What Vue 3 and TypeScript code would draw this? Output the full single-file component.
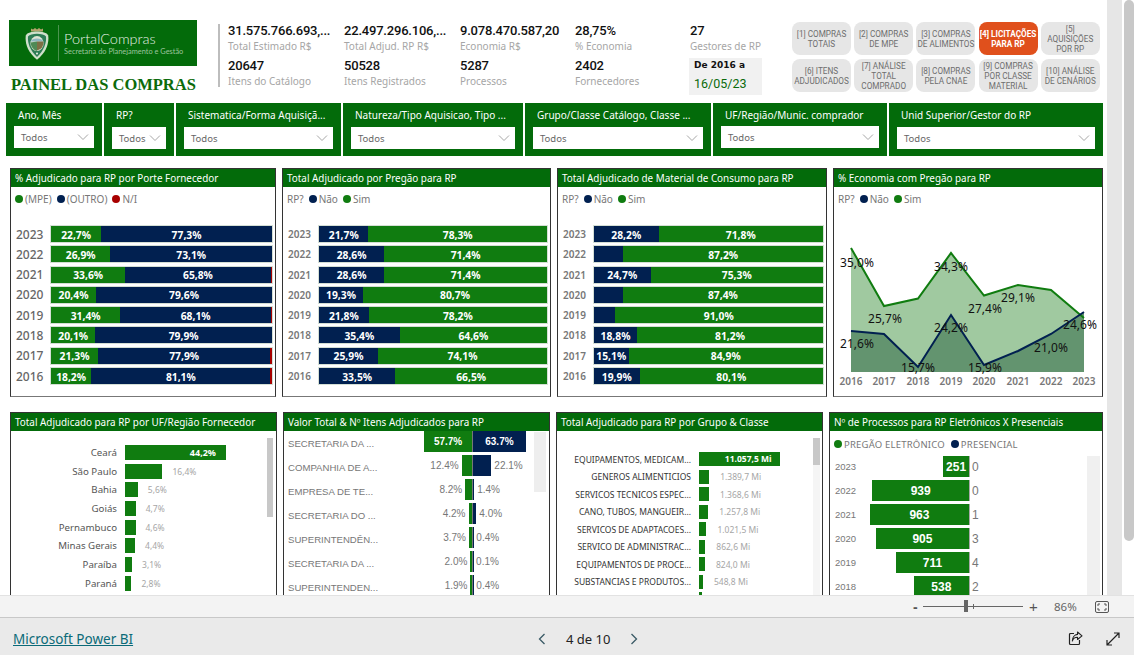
<script setup lang="ts">
interface Seg { v: number; c: string; label?: boolean }

const kpis = [
  { value: "31.575.766.693,...", label: "Total Estimado R$" },
  { value: "22.497.296.106,...", label: "Total Adjud. RP R$" },
  { value: "9.078.470.587,20", label: "Economia R$" },
  { value: "28,75%", label: "% Economia" },
  { value: "27", label: "Gestores de RP" },
  { value: "20647", label: "Itens do Catálogo" },
  { value: "50528", label: "Itens Registrados" },
  { value: "5287", label: "Processos" },
  { value: "2402", label: "Fornecedores" },
];

const navButtons = [
  "[1] COMPRAS\nTOTAIS",
  "[2] COMPRAS\nDE MPE",
  "[3] COMPRAS\nDE ALIMENTOS",
  "[4] LICITAÇÕES\nPARA RP",
  "[5]\nAQUISIÇÕES\nPOR RP",
  "[6] ITENS\nADJUDICADOS",
  "[7] ANÁLISE\nTOTAL\nCOMPRADO",
  "[8] COMPRAS\nPELA CNAE",
  "[9] COMPRAS\nPOR CLASSE\nMATERIAL",
  "[10] ANÁLISE\nDE CENÁRIOS",
];

const filters = [
  "Ano, Mês",
  "RP?",
  "Sistematica/Forma Aquisiçã...",
  "Natureza/Tipo Aquisicao, Tipo ...",
  "Grupo/Classe Catálogo, Classe ...",
  "UF/Região/Munic. comprador",
  "Unid Superior/Gestor do RP",
];

const years = [2023, 2022, 2021, 2020, 2019, 2018, 2017, 2016];
const GREEN = "#107c10";
const NAVY = "#012050";
const RED = "#a80000";

const porte = [
  [22.7, 77.3, 0],
  [26.9, 73.1, 0],
  [33.6, 65.8, 0.6],
  [20.4, 79.6, 0],
  [31.4, 68.1, 0.5],
  [20.1, 79.9, 0],
  [21.3, 77.9, 0.8],
  [18.2, 81.1, 0.7],
];
const pregao = [21.7, 28.6, 28.6, 19.3, 21.8, 35.4, 25.9, 33.5];
const material = [28.2, 12.8, 24.7, 12.6, 9, 18.8, 15.1, 19.9];

function fmt(v: number) {
  return v.toFixed(1).replace(".", ",") + "%";
}

const stackCards: {
  title: string;
  legend: { t: string; c: string }[];
  prefix: string;
  big: boolean;
  rows: Seg[][];
}[] = [
  {
    title: "% Adjudicado para RP por Porte Fornecedor",
    prefix: "",
    big: true,
    legend: [
      { t: "(MPE)", c: GREEN },
      { t: "(OUTRO)", c: NAVY },
      { t: "N/I", c: RED },
    ],
    rows: porte.map((r) => [
      { v: r[0], c: GREEN, label: true },
      { v: r[1], c: NAVY, label: true },
      { v: r[2], c: RED },
    ]),
  },
  {
    title: "Total Adjudicado por Pregão para RP",
    prefix: "RP?",
    big: false,
    legend: [
      { t: "Não", c: NAVY },
      { t: "Sim", c: GREEN },
    ],
    rows: pregao.map((n) => [
      { v: n, c: NAVY, label: true },
      { v: +(100 - n).toFixed(1), c: GREEN, label: true },
    ]),
  },
  {
    title: "Total Adjudicado de Material de Consumo para RP",
    prefix: "RP?",
    big: false,
    legend: [
      { t: "Não", c: NAVY },
      { t: "Sim", c: GREEN },
    ],
    rows: material.map((n) => [
      { v: n, c: NAVY, label: n > 14 },
      { v: +(100 - n).toFixed(1), c: GREEN, label: true },
    ]),
  },
];

// pontos do gráfico de área, em px do próprio visual
const areaX = [851, 884, 918, 951, 984, 1018, 1051, 1084];
const simY = [248, 306, 298.5, 253, 295.5, 285, 290, 318];
const naoY = [331, 334, 367, 315, 365, 351, 334, 312];
const line = (ys: number[]) => ys.map((y, i) => `${areaX[i]},${y}`).join(" ");
const area = (ys: number[]) => `851,372 ${line(ys)} 1084,372`;
const areaLabels = [
  { t: "35,0%", x: 857, y: 263 },
  { t: "25,7%", x: 885, y: 319 },
  { t: "15,7%", x: 918, y: 368 },
  { t: "34,3%", x: 951, y: 267 },
  { t: "27,4%", x: 985, y: 309 },
  { t: "29,1%", x: 1018, y: 298 },
  { t: "21,0%", x: 1051, y: 348 },
  { t: "24,6%", x: 1080, y: 325 },
  { t: "21,6%", x: 857, y: 344 },
  { t: "24,2%", x: 951, y: 328 },
  { t: "15,9%", x: 985, y: 368 },
];

const ufRows = [
  { n: "Ceará", v: 44.2 },
  { n: "São Paulo", v: 16.4 },
  { n: "Bahia", v: 5.6 },
  { n: "Goiás", v: 4.7 },
  { n: "Pernambuco", v: 4.6 },
  { n: "Minas Gerais", v: 4.4 },
  { n: "Paraíba", v: 3.1 },
  { n: "Paraná", v: 2.8 },
  { n: "", v: 2.8 },
];

const tornado = [
  { n: "SECRETARIA DA ...", l: 57.7, r: 63.7 },
  { n: "COMPANHIA DE A...", l: 12.4, r: 22.1 },
  { n: "EMPRESA DE TE...", l: 8.2, r: 1.4 },
  { n: "SECRETARIA DO ...", l: 4.2, r: 4.0 },
  { n: "SUPERINTENDÊN...", l: 3.7, r: 0.4 },
  { n: "SECRETARIA DA ...", l: 2.0, r: 0.1 },
  { n: "SUPERINTENDEN...", l: 1.9, r: 0.4 },
];

const grupos = [
  { n: "EQUIPAMENTOS, MEDICAM...", v: 11057.5, t: "11.057,5 Mi" },
  { n: "GENEROS ALIMENTICIOS", v: 1389.7, t: "1.389,7 Mi" },
  { n: "SERVICOS TECNICOS ESPEC...", v: 1368.6, t: "1.368,6 Mi" },
  { n: "CANO, TUBOS, MANGUEIR...", v: 1257.8, t: "1.257,8 Mi" },
  { n: "SERVICOS DE ADAPTACOES...", v: 1021.5, t: "1.021,5 Mi" },
  { n: "SERVICO DE ADMINISTRAC...", v: 862.6, t: "862,6 Mi" },
  { n: "EQUIPAMENTOS DE PROCE...", v: 824.0, t: "824,0 Mi" },
  { n: "SUBSTANCIAS E PRODUTOS...", v: 548.8, t: "548,8 Mi" },
  { n: "", v: 400, t: "" },
];

const processos = [
  { y: 2023, e: 251, p: 0 },
  { y: 2022, e: 939, p: 0 },
  { y: 2021, e: 963, p: 1 },
  { y: 2020, e: 905, p: 3 },
  { y: 2019, e: 711, p: 4 },
  { y: 2018, e: 538, p: 2 },
];
</script>

<template>
  <div class="app">
    <div class="main">
      <div class="canvas">
        <header class="top">
          <div class="brand">
            <div class="logo">
              <svg class="crest" viewBox="0 0 24 33" width="24" height="33">
                <path d="M6 4.500V1.500l2 1 2-1.500 2 1.500 2-1.500 2 1.500 2-1V4.500Z" fill="#b5a36e" />
                <path d="M12 4.500C17 4.500 22 5.500 23.200 8.500C24.200 16 21.500 25 12 32.800C2.500 25 -.2 16 .8 8.500C2 5.500 7 4.500 12 4.500Z" fill="#cfe0cb" />
                <path d="M12 6.800C16 6.800 19.600 7.800 21 9.600C21.600 16 19 23.600 12 30C5 23.600 2.400 16 3 9.600C4.400 7.800 8 6.800 12 6.800Z" fill="#2e7d56" />
                <ellipse cx="12" cy="16.500" rx="6.600" ry="7.600" fill="#dfe6d4" />
                <path d="M5.600 14.500C7 10.500 17 10.500 18.400 14.500Z" fill="#8fb6c0" />
                <path d="M12 14.500h6.400c.4 3-1 6-3 7.600l-3.400 1.500Z" fill="#7d6f45" />
                <path d="M5.600 15.500L12 14.500V24C8.500 23 5.800 20 5.600 15.500Z" fill="#4f8a55" />
                <circle cx="12" cy="26.500" r="1" fill="#e8efe4" />
              </svg>
              <span class="logo__rule"></span>
              <div class="logo__text">
                <div class="logo__name">PortalCompras</div>
                <div class="logo__sub">Secretaria do Planejamento e Gestão</div>
              </div>
            </div>
            <h1 class="brand__title">PAINEL DAS COMPRAS</h1>
          </div>
          <span class="top__rule"></span>
          <div class="kpis">
            <div v-for="k in kpis" :key="k.label" class="kpi">
              <div class="kpi__value">{{ k.value }}</div>
              <div class="kpi__label">{{ k.label }}</div>
            </div>
            <div class="date">
              <div class="date__from">De 2016 a</div>
              <div class="date__to">16/05/23</div>
            </div>
          </div>
          <nav class="nav">
            <div
              v-for="(b, i) in navButtons"
              :key="b"
              class="nav__btn"
              :class="{ nav__btn_active: i === 3 }"
            >{{ b }}</div>
          </nav>
        </header>

        <section class="filters">
          <div v-for="(f, i) in filters" :key="f" class="filter" :class="{ filter_high: i === 0 || i === 5 }">
            <div class="filter__title">{{ f }}</div>
            <div class="filter__select">
              <span>Todos</span>
              <svg width="12" height="6" viewBox="0 0 12 6"><path d="M1 .5l5 5 5-5" fill="none" stroke="#a6a6a6" /></svg>
            </div>
          </div>
        </section>

        <section class="row row_first">
          <article v-for="c in stackCards" :key="c.title" class="card" :class="{ card_big: c.big }">
            <h2 class="card__title">{{ c.title }}</h2>
            <div class="legend">
              <span v-if="c.prefix" class="legend__prefix">{{ c.prefix }}</span>
              <span v-for="l in c.legend" :key="l.t" class="legend__item">
                <i class="dot" :style="{ background: l.c }"></i>{{ l.t }}
              </span>
            </div>
            <div class="stack">
              <div v-for="(r, i) in c.rows" :key="i" class="stack__row">
                <span class="stack__year">{{ years[i] }}</span>
                <div class="stack__bar">
                  <div
                    v-for="(s, j) in r"
                    :key="j"
                    class="stack__seg"
                    :style="{ width: s.v + '%', background: s.c }"
                  >{{ s.label ? fmt(s.v) : "" }}</div>
                </div>
              </div>
            </div>
          </article>

          <article class="card">
            <h2 class="card__title">% Economia com Pregão para RP</h2>
            <div class="legend">
              <span class="legend__prefix">RP?</span>
              <span class="legend__item"><i class="dot dot_navy"></i>Não</span>
              <span class="legend__item"><i class="dot dot_green"></i>Sim</span>
            </div>
            <svg class="area" viewBox="834 211 268 185" width="268" height="185">
              <polygon :points="area(simY)" fill="#a0c9a0" />
              <polygon :points="area(naoY)" fill="#63946f" />
              <polyline :points="line(simY)" fill="none" stroke="#107c10" stroke-width="2" />
              <polyline :points="line(naoY)" fill="none" stroke="#012050" stroke-width="2" />
              <text
                v-for="l in areaLabels"
                :key="l.t"
                :x="l.x"
                :y="l.y + 4"
                class="area__label"
                text-anchor="middle"
              >{{ l.t }}</text>
              <text
                v-for="(x, i) in areaX"
                :key="x"
                :x="x"
                y="385"
                class="area__year"
                text-anchor="middle"
              >{{ 2016 + i }}</text>
            </svg>
          </article>
        </section>

        <section class="row row_second">
          <article class="card card_cut">
            <h2 class="card__title">Total Adjudicado para RP por UF/Região Fornecedor</h2>
            <div class="hbars hbars_uf">
              <div v-for="(r, i) in ufRows" :key="i" class="hbars__row">
                <span class="hbars__name">{{ r.n }}</span>
                <div class="hbars__fill" :style="{ width: r.v * 2.285 + 'px' }">
                  <span v-if="i === 0" class="hbars__inner">{{ fmt(r.v) }}</span>
                </div>
                <span v-if="i > 0 && r.n" class="hbars__value">{{ fmt(r.v) }}</span>
              </div>
            </div>
            <span class="scroll scroll_uf"></span>
          </article>

          <article class="card card_cut">
            <h2 class="card__title">Valor Total &amp; Nº Itens Adjudicados para RP</h2>
            <div class="tornado">
              <div v-for="(r, i) in tornado" :key="i" class="tornado__row">
                <span class="tornado__name">{{ r.n }}</span>
                <div class="tornado__left">
                  <span v-if="i > 0" class="tornado__num">{{ r.l.toFixed(1) }}%</span>
                  <div class="tornado__bar tornado__bar_green" :style="{ width: r.l * 0.83 + 'px' }">
                    <span v-if="i === 0">{{ r.l.toFixed(1) }}%</span>
                  </div>
                </div>
                <div class="tornado__right">
                  <div class="tornado__bar tornado__bar_navy" :style="{ width: r.r * 0.83 + 'px' }">
                    <span v-if="i === 0">{{ r.r.toFixed(1) }}%</span>
                  </div>
                  <span v-if="i > 0" class="tornado__num">{{ r.r.toFixed(1) }}%</span>
                </div>
              </div>
            </div>
            <span class="scroll scroll_tornado"></span>
          </article>

          <article class="card card_cut">
            <h2 class="card__title">Total Adjudicado para RP por Grupo &amp; Classe</h2>
            <div class="hbars hbars_group">
              <div v-for="(r, i) in grupos" :key="i" class="hbars__row">
                <span class="hbars__name">{{ r.n }}</span>
                <div class="hbars__fill" :style="{ width: (r.v * 80.6) / 11057.5 + 'px' }">
                  <span v-if="i === 0" class="hbars__inner">{{ r.t }}</span>
                </div>
                <span v-if="i > 0" class="hbars__value">{{ r.t }}</span>
              </div>
            </div>
            <span class="scroll scroll_group-track"></span>
            <span class="scroll scroll_group"></span>
          </article>

          <article class="card card_cut">
            <h2 class="card__title">Nº de Processos para RP Eletrônicos X Presenciais</h2>
            <div class="legend legend_caps">
              <span class="legend__item"><i class="dot dot_green"></i>PREGÃO ELETRÔNICO</span>
              <span class="legend__item"><i class="dot dot_navy"></i>PRESENCIAL</span>
            </div>
            <div class="proc">
              <div v-for="r in processos" :key="r.y" class="proc__row">
                <span class="proc__year">{{ r.y }}</span>
                <div class="proc__left">
                  <div class="proc__bar" :style="{ width: r.e * 0.103 + 'px' }">{{ r.e }}</div>
                </div>
                <span class="proc__num">{{ r.p }}</span>
              </div>
            </div>
            <span class="scroll scroll_proc"></span>
          </article>
        </section>
      </div>
      <div class="gutter"></div>
      <div class="vscroll"></div>
    </div>

    <div class="zoombar">
      <span class="zoombar__sign">-</span>
      <div class="slider">
        <i class="slider__tick"></i>
        <i class="slider__thumb"></i>
      </div>
      <span class="zoombar__sign zoombar__sign_plus">+</span>
      <span class="zoombar__pct">86%</span>
      <svg class="zoombar__fit" width="14" height="12" viewBox="0 0 14 12">
        <rect x=".5" y=".5" width="13" height="11" rx="1.5" fill="none" stroke="#555" />
        <path d="M3 5V3h2M9 3h2v2M11 7v2H9M5 9H3V7" fill="none" stroke="#555" />
      </svg>
    </div>

    <footer class="footer">
      <a class="footer__link">Microsoft Power BI</a>
      <div class="pager">
        <svg width="8" height="12" viewBox="0 0 8 12"><path d="M6.5 1l-5 5 5 5" fill="none" stroke="#3a5a66" stroke-width="1.3" /></svg>
        <span class="pager__text">4 de 10</span>
        <svg width="8" height="12" viewBox="0 0 8 12"><path d="M1.5 1l5 5-5 5" fill="none" stroke="#3a5a66" stroke-width="1.3" /></svg>
      </div>
      <div class="footer__icons">
        <svg width="15" height="15" viewBox="0 0 15 15">
          <path d="M6 2.500H2.500a1 1 0 0 0-1 1v9a1 1 0 0 0 1 1h8a1 1 0 0 0 1-1V9" fill="none" stroke="#222" stroke-width="1.2" />
          <path d="M9.500 1l4.500 3.800-4.500 3.700V6.200C7 6.200 5 7.600 4.300 10 4.300 6.500 6.400 3.600 9.500 3.400Z" fill="none" stroke="#222" stroke-width="1.1" stroke-linejoin="round" />
        </svg>
        <svg width="14" height="14" viewBox="0 0 14 14">
          <path d="M1 13L13 1M8 1h5v5M1 8v5h5" fill="none" stroke="#222" stroke-width="1.2" />
        </svg>
      </div>
    </footer>
  </div>
</template>

<style scoped>
.app {
  display: flex;
  flex-direction: column;
  width: 1134px;
  height: 655px;
  overflow: hidden;
  background: #fff;
  font-family: "Noto Sans", "Open Sans", sans-serif;
}

.main {
  display: flex;
  height: 595px;
  overflow: hidden;
}

.canvas {
  width: 1107px;
  height: 595px;
  padding-top: 20px;
  box-sizing: border-box;
  overflow: hidden;
}

.gutter {
  width: 15px;
  background: #e6e6e6;
}

.vscroll {
  width: 10px;
  height: 541px;
  margin-left: 2px;
  background: #c8c8c8;
  border-radius: 5px;
}

/* cabeçalho */
.top {
  display: flex;
  height: 83px;
  padding-left: 9px;
}

.brand {
  width: 188px;
}

.logo {
  display: flex;
  align-items: center;
  height: 46px;
  background: #036b0a;
}

.crest {
  margin-left: 16px;
}

.logo__rule {
  width: 1px;
  height: 36px;
  margin: 0 5px 0 9px;
  background: #4c9450;
}

.logo__name {
  font-family: Lato, sans-serif;
  font-size: 14.5px;
  font-weight: 300;
  line-height: 17px;
  color: #e4efe4;
}

.logo__sub {
  font-family: Lato, sans-serif;
  font-size: 7.4px;
  line-height: 10px;
  color: #9cc49e;
  white-space: nowrap;
}

.brand__title {
  margin: 10px 0 0 2px;
  font-family: "Liberation Serif", serif;
  font-size: 16.5px;
  font-weight: 700;
  line-height: 18px;
  color: #0b6b0b;
  white-space: nowrap;
}

.top__rule {
  width: 2px;
  height: 63px;
  margin: 4px 0 0 21px;
  background: #bdbdbd;
}

.kpis {
  position: relative;
  display: grid;
  grid-template-columns: 116px 116px 115px 115px 102px;
  grid-auto-rows: 35px;
  align-content: start;
  width: 564px;
  margin: 3px 0 0 8px;
}

.kpi__value {
  font-family: Roboto, sans-serif;
  font-size: 13px;
  font-weight: 500;
  line-height: 16px;
  letter-spacing: -0.2px;
  color: #111;
  white-space: nowrap;
}

.kpi__label {
  font-size: 10px;
  line-height: 15px;
  color: #a6a6a6;
  white-space: nowrap;
}

.date {
  position: absolute;
  top: 35px;
  left: 461px;
  width: 73px;
  height: 37px;
  padding-left: 5px;
  box-sizing: border-box;
  background: #f1f1f1;
}

.date__from {
  font-family: "DejaVu Sans", sans-serif;
  font-size: 9px;
  font-weight: 700;
  line-height: 15px;
  color: #111;
}

.date__to {
  font-family: Roboto, sans-serif;
  font-size: 12.5px;
  line-height: 21px;
  color: #0b6b0b;
}

.nav {
  display: grid;
  grid-template-columns: repeat(5, 59px);
  grid-auto-rows: 33px;
  gap: 4px 3.2px;
  align-content: start;
  margin: 2px 0 0 0;
}

.nav__btn {
  display: flex;
  align-items: center;
  justify-content: center;
  font-family: Roboto, sans-serif;
  font-size: 8.2px;
  line-height: 10px;
  text-align: center;
  white-space: pre-line;
  color: #6e6e6e;
  background: #e6e6e6;
  border-radius: 8px;
}

.nav__btn_active {
  font-weight: 700;
  color: #fff;
  background: #e0501c;
}

/* filtros */
.filters {
  display: grid;
  grid-template-columns: 96px 70px 165px 180px 186px 174px 214px;
  gap: 2px;
  height: 53px;
  padding-left: 6px;
}

.filter {
  height: 53px;
  padding: 5px 8px 0;
  box-sizing: border-box;
  background: #036b0a;
}

.filter__title {
  padding-left: 4px;
  font-size: 10px;
  line-height: 14px;
  color: #fff;
  white-space: nowrap;
}

.filter__select {
  display: flex;
  align-items: center;
  justify-content: space-between;
  height: 22px;
  margin-top: 5px;
  padding: 0 5px 0 7px;
  font-size: 9.5px;
  color: #666;
  background: #fff;
}

.filter_high .filter__select {
  margin-top: 4px;
}

/* visuais */
.row {
  display: grid;
  gap: 6px;
  padding-left: 10px;
}

.row_first {
  grid-template-columns: 266px 269px 270px 270px;
  height: 229px;
  margin-top: 12px;
}

.row_second {
  grid-template-columns: 267px 267px 267px 274px;
  margin-top: 15px;
}

.card {
  position: relative;
  box-sizing: border-box;
  height: 229px;
  border: 1px solid #333;
  border-bottom-color: #777;
  overflow: hidden;
}

.card_cut {
  height: 240px;
}

.card__title {
  height: 18px;
  margin: 0;
  padding-left: 4px;
  font-size: 9.9px;
  font-weight: 400;
  line-height: 18px;
  color: #fff;
  white-space: nowrap;
  background: #036b0a;
}

.legend {
  display: flex;
  align-items: center;
  gap: 5px;
  height: 24px;
  padding-left: 4px;
  font-size: 10px;
  color: #777;
}

.legend__item {
  display: inline-flex;
  align-items: center;
  gap: 2px;
}

.dot {
  display: inline-block;
  width: 8px;
  height: 8px;
  border-radius: 50%;
}

.dot_green {
  background: #107c10;
}

.dot_navy {
  background: #012050;
}

.legend_caps {
  height: 24px;
  margin-top: 1px;
  font-size: 9.5px;
  letter-spacing: 0.2px;
  gap: 6px;
}

.stack {
  display: flex;
  flex-direction: column;
  gap: 4.3px;
  padding: 15px 3px 0 5px;
}

.stack__row {
  display: flex;
  align-items: center;
  height: 16px;
}

.stack__year {
  width: 31px;
  flex: none;
  font-size: 10px;
  font-weight: 600;
  color: #777;
}

.card_big .stack__year {
  width: 35px;
  font-size: 12px;
  font-weight: 500;
  color: #666;
}

.stack__bar {
  display: flex;
  flex: 1;
  height: 16px;
  box-shadow: 0 0 0 1px #d5dfd5;
}

.stack__seg {
  display: flex;
  align-items: center;
  justify-content: center;
  height: 16px;
  padding-top: 1px;
  box-sizing: border-box;
  font-size: 10.3px;
  font-weight: 700;
  color: #fff;
}

.area {
  display: block;
}

.area__label {
  font-family: "Noto Sans", sans-serif;
  font-size: 12px;
  fill: #111;
}

.area__year {
  font-family: "Noto Sans", sans-serif;
  font-size: 10px;
  font-weight: 600;
  fill: #777;
}

/* barras horizontais */
.hbars {
  display: flex;
  flex-direction: column;
}

.hbars__row {
  display: flex;
  align-items: center;
  flex: none;
}

.hbars__name {
  flex: none;
  text-align: right;
  white-space: nowrap;
  color: #555;
}

.hbars__fill {
  position: relative;
  flex: none;
  background: #107c10;
}

.hbars__inner {
  position: absolute;
  top: 0;
  right: 10px;
  font-weight: 700;
  color: #fff;
}

.hbars__value {
  margin-left: 10px;
  color: #a6a6a6;
  white-space: nowrap;
}

.hbars_uf {
  gap: 3.7px;
  padding-top: 14px;
  font-size: 10px;
}

.hbars_uf .hbars__row {
  height: 15px;
}

.hbars_uf .hbars__name {
  width: 106px;
  margin-right: 8px;
  font-size: 9.7px;
}

.hbars_uf .hbars__fill {
  height: 15px;
}

.hbars_uf .hbars__inner {
  line-height: 15px;
  font-size: 9px;
}

.hbars_uf .hbars__value {
  font-size: 8.5px;
}

.hbars_group {
  gap: 3.5px;
  padding-top: 21px;
  font-size: 8.5px;
}

.hbars_group .hbars__row {
  height: 14px;
}

.hbars_group .hbars__name {
  width: 134px;
  margin-right: 8px;
  font-size: 8.5px;
  color: #333;
}

.hbars_group .hbars__fill {
  height: 14px;
}

.hbars_group .hbars__inner {
  line-height: 14px;
  right: 8px;
  font-size: 8.5px;
}

.hbars_group .hbars__value {
  margin-left: 11px;
  font-size: 8.5px;
}

/* faixa de valores espelhada */
.tornado {
  font-family: "Liberation Sans", sans-serif;
  font-size: 10px;
  color: #777;
}

.tornado__row {
  display: grid;
  grid-template-columns: 119px 65px 1fr;
  height: 21px;
  margin-bottom: 3px;
  padding-left: 4px;
}

.tornado__name {
  align-self: center;
  padding-top: 4px;
  font-size: 9.6px;
  white-space: nowrap;
}

.tornado__left,
.tornado__right {
  display: flex;
  align-items: stretch;
}

.tornado__left {
  justify-content: flex-end;
}

.tornado__num {
  align-self: center;
  margin: 0 3px;
}

.tornado__bar {
  display: flex;
  align-items: center;
  justify-content: center;
  font-weight: 700;
  color: #fff;
}

.tornado__bar_green {
  background: #107c10;
}

.tornado__bar_navy {
  background: #012050;
}

.tornado__right {
  border-left: 1px solid #777;
}

.scroll {
  position: absolute;
  display: block;
}

.scroll_uf {
  top: 25px;
  left: 256px;
  width: 6px;
  height: 79px;
  background: #c8c8c8;
}

.scroll_tornado {
  top: 19px;
  left: 250px;
  width: 12px;
  height: 60px;
  background: #eee;
}

.scroll_group-track {
  top: 25px;
  left: 256px;
  width: 7px;
  height: 200px;
  background: #f5f5f5;
}

.scroll_group {
  top: 25px;
  left: 256px;
  width: 7px;
  height: 27px;
  background: #c8c8c8;
}

.scroll_proc {
  top: 43px;
  left: 257px;
  width: 13px;
  height: 190px;
  background: #f0f0f0;
}

.proc__row {
  display: grid;
  grid-template-columns: 39px 95px auto;
  align-items: stretch;
  width: 160px;
  height: 21px;
  margin-bottom: 3px;
  padding-left: 5px;
  font-family: "Liberation Sans", sans-serif;
}

.proc__year {
  align-self: center;
  font-size: 9.5px;
  color: #777;
}

.proc__left {
  display: flex;
  justify-content: flex-end;
  width: 100px;
  margin-left: -5px;
  border-right: 1px solid #aaa;
}

.proc__bar {
  display: flex;
  align-items: center;
  justify-content: center;
  font-size: 12px;
  font-weight: 700;
  color: #fff;
  background: #107c10;
}

.proc__num {
  align-self: center;
  margin-left: 3px;
  font-size: 12px;
  color: #777;
}

/* barra de zoom */
.zoombar {
  display: flex;
  align-items: center;
  flex: none;
  height: 23px;
  padding-left: 913px;
  box-sizing: border-box;
  background: #f3f3f3;
  border-top: 1px solid #e2e2e2;
  border-bottom: 1px solid #c8c8c8;
}

.zoombar__sign {
  width: 10px;
  font-family: "Liberation Sans", sans-serif;
  font-size: 14px;
  font-weight: 700;
  line-height: 14px;
  color: #555;
}

.zoombar__sign_plus {
  margin-left: 6px;
  font-size: 15px;
  font-weight: 400;
}

.slider {
  position: relative;
  width: 100px;
  height: 1px;
  background: #666;
}

.slider__thumb {
  position: absolute;
  top: -6px;
  left: 41px;
  width: 4px;
  height: 12px;
  background: #666;
}

.slider__tick {
  position: absolute;
  top: -2px;
  left: 50px;
  width: 1px;
  height: 5px;
  background: #666;
}

.zoombar__pct {
  margin-left: 15px;
  font-size: 11.5px;
  color: #666;
}

.zoombar__fit {
  margin-left: 18px;
}

/* rodapé */
.footer {
  position: relative;
  display: flex;
  align-items: center;
  flex: 1;
  padding: 4px 0 0 13px;
  background: #eaeaea;
}

.footer__link {
  font-size: 13.5px;
  color: #0b6a78;
  text-decoration: underline;
}

.pager {
  position: absolute;
  top: 4px;
  bottom: 0;
  left: 538px;
  display: flex;
  align-items: center;
  gap: 20px;
}

.pager__text {
  font-size: 13px;
  color: #222;
}

.footer__icons {
  display: flex;
  align-items: center;
  gap: 23px;
  margin-left: auto;
  margin-right: 14px;
}
</style>

<style>
html,
body {
  margin: 0;
  padding: 0;
}
</style>
